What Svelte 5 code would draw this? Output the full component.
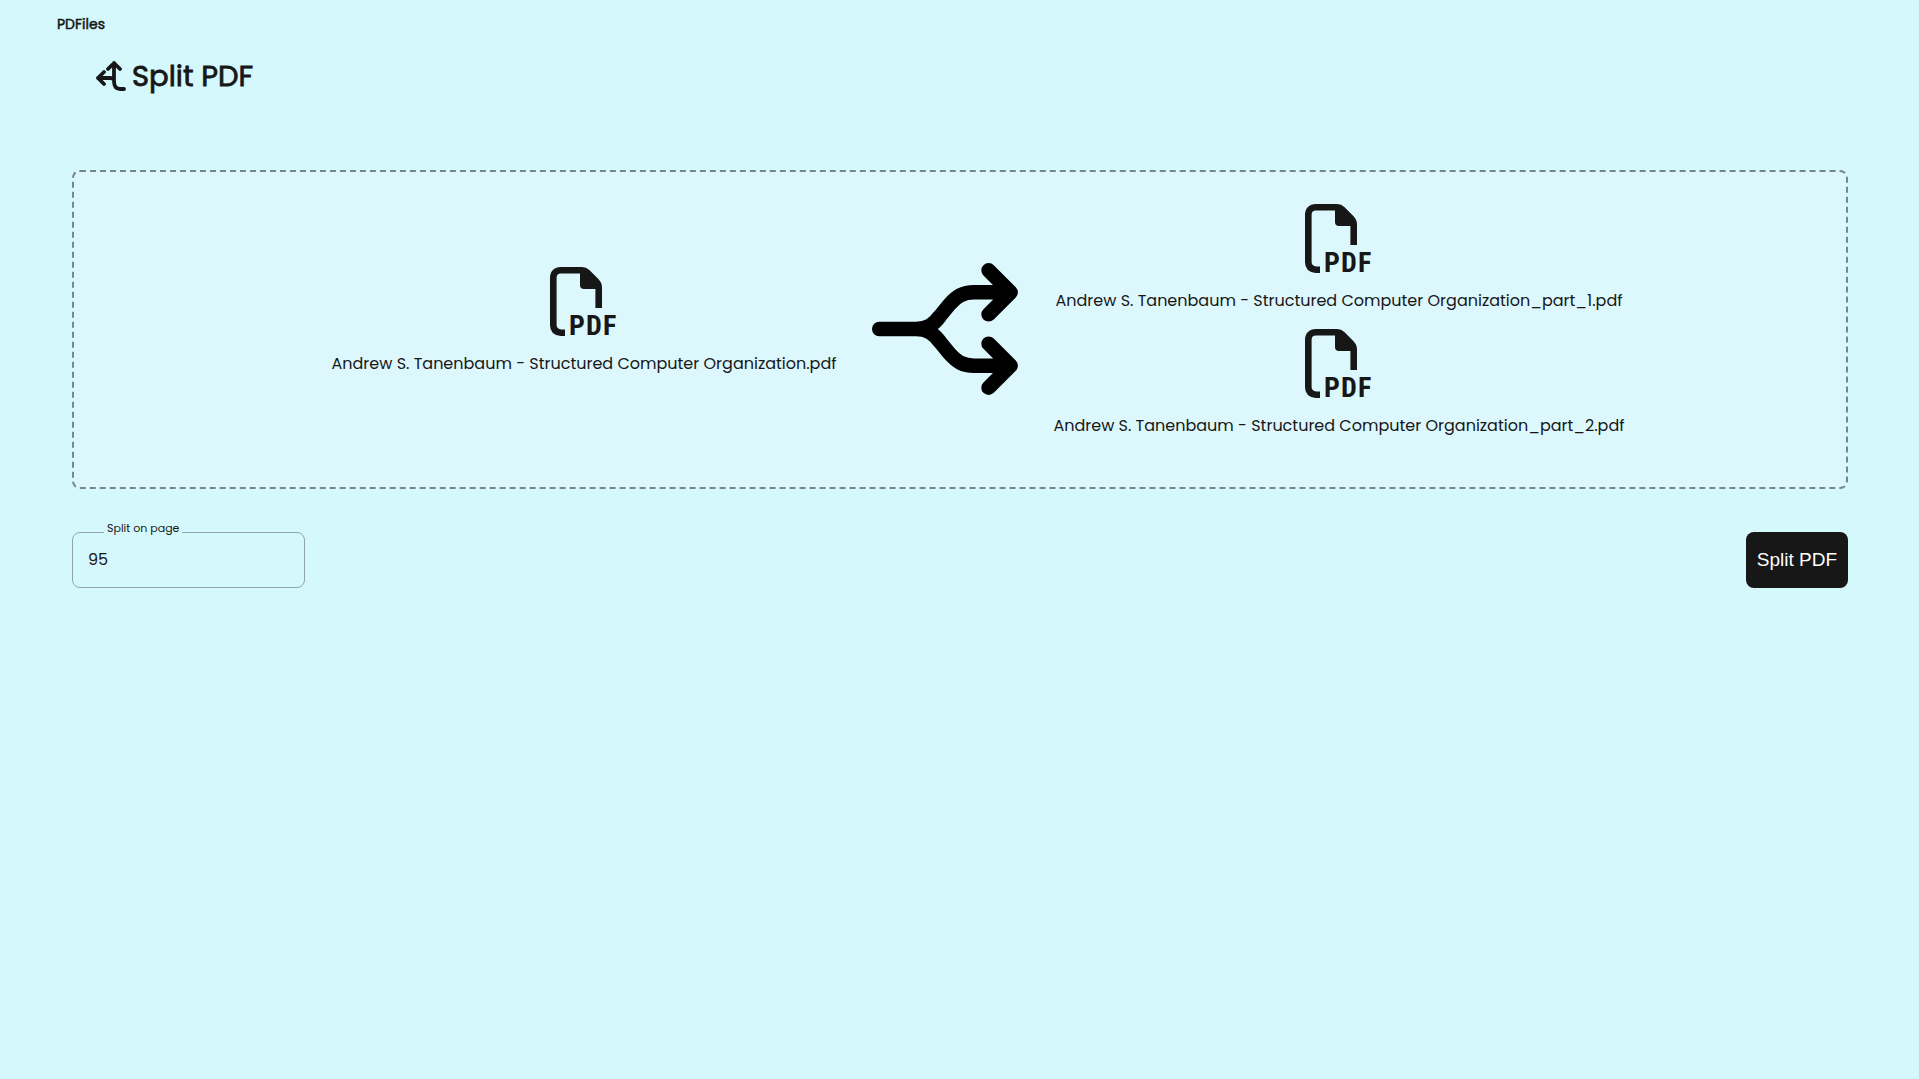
<script>
  const source = 'Andrew S. Tanenbaum - Structured Computer Organization';
  const parts = [`${source}_part_1.pdf`, `${source}_part_2.pdf`];
  let page = $state('95');
</script>

{#snippet file(name)}
  <figure class="file">
    <svg class="file-icon" viewBox="0 0 68 69" aria-hidden="true">
      <path class="outline" d="M15 65.7h-4Q3.3 65 3.3 58V11Q3.3 3.3 11 3.3h21q3 0 5 2l9 9q2.700 2.700 2.700 6V41" />
      <path class="fold" d="M30 3v15q0 4 4 4h15v-3L34 3z" />
      <text x="19 36 53" y="68">PDF</text>
    </svg>
    <figcaption>{name}</figcaption>
  </figure>
{/snippet}

<div class="app">
  <header>
    <a class="brand" href="#home">PDFiles</a>
    <h1>
      <svg class="title-icon" viewBox="0 0 30 30" aria-hidden="true">
        <path d="M18 2v18q0 8 6 8h4M12 8l6-6 6 6M8 11l-6 6 6 6M2 17h12q3 0 4 2" />
      </svg>
      Split PDF
    </h1>
  </header>

  <main>
    <section class="preview" aria-label="Split preview">
      <div class="source">
        {@render file(`${source}.pdf`)}
      </div>
      <svg class="split-icon" viewBox="0 0 146 132" aria-hidden="true">
        <path d="M7.300 66H44c12 0 18-5 24-13l9-11c8-9 14-12.700 25-12.700h34M44 66c12 0 18 5 24 13l9 11c8 9 14 12.700 25 12.700h34M116.600 7.300l22 22-22 22M116.600 80.700l22 22-22 22" />
      </svg>
      <div class="parts">
        {#each parts as name}
          {@render file(name)}
        {/each}
      </div>
    </section>

    <form class="controls" onsubmit={(e) => e.preventDefault()}>
      <fieldset>
        <legend><label for="page">Split on page</label></legend>
        <input id="page" type="text" inputmode="numeric" bind:value={page} />
      </fieldset>
      <button type="submit">Split PDF</button>
    </form>
  </main>
</div>

<style>
  :global(body) {
    background: #d4f8fc;
  }
  .app {
    color: #171717;
    font: 16px/24px Poppins, Inter, sans-serif;
  }
  header {
    padding: 12px 57px 0;
  }
  .brand {
    display: block;
    width: max-content;
    color: inherit;
    text-decoration: none;
    font-size: 14px;
    -webkit-text-stroke: 0.5px currentColor;
  }
  h1 {
    display: flex;
    align-items: center;
    gap: 6px;
    margin: 18px 0 0 39px;
    font-size: 29px;
    line-height: 44px;
    font-weight: 400;
    -webkit-text-stroke: 0.8px currentColor;
  }
  .title-icon,
  .split-icon {
    fill: none;
    stroke: currentColor;
    stroke-linecap: round;
    stroke-linejoin: round;
  }
  .title-icon {
    width: 30px;
    height: 30px;
    stroke-width: 3.800;
  }
  main {
    padding: 72px 71px 0 72px;
  }
  .preview {
    display: flex;
    justify-content: center;
    align-items: center;
    gap: 32px;
    padding: 32px 0 33px 36px;
    border: 2px dashed #74878a;
    border-radius: 8px;
    background: #ddf8fd;
  }
  .source {
    min-width: 512px;
  }
  .parts {
    min-width: 578px;
  }
  .split-icon {
    width: 146px;
    height: 132px;
    color: #000;
    stroke-width: 14.600;
  }
  .file {
    display: flex;
    flex-direction: column;
    align-items: center;
    gap: 16px;
    margin: 0;
    padding-bottom: 16px;
  }
  .file-icon {
    width: 68px;
    height: 69px;
    overflow: visible;
  }
  .outline {
    fill: none;
    stroke: currentColor;
    stroke-width: 6.600;
  }
  .fold {
    fill: currentColor;
  }
  .file-icon text {
    fill: currentColor;
    font: 700 28px 'Liberation Sans Narrow', 'Roboto Condensed', sans-serif;
  }
  .controls {
    display: flex;
    justify-content: space-between;
    align-items: flex-end;
    margin-top: 34px;
  }
  fieldset {
    box-sizing: border-box;
    width: 233px;
    margin: 0;
    padding: 0 15px;
    border: 1px solid #90a5a8;
    border-radius: 8px;
  }
  legend {
    margin-left: 16px;
    padding: 0 3px 7px;
    font-size: 11px;
    line-height: 11px;
  }
  label {
    display: block;
  }
  input {
    display: block;
    box-sizing: border-box;
    width: 100%;
    height: 46px;
    padding: 0 0 10px;
    border: 0;
    outline: 0;
    background: none;
    color: inherit;
    font: inherit;
  }
  button {
    height: 56px;
    padding: 0 11px;
    border: 0;
    border-radius: 8px;
    background: #171717;
    color: #fff;
    font: 19px 'Liberation Sans', Arial, sans-serif;
    cursor: pointer;
  }
</style>
